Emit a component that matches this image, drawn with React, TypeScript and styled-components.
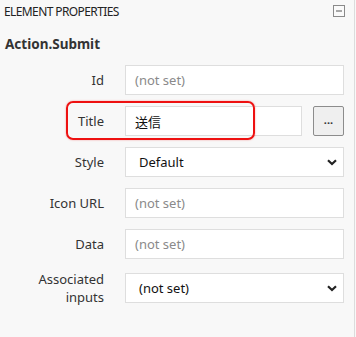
import React from "react";
import styled, { createGlobalStyle } from "styled-components";

const FONT = `"Noto Sans", "Noto Sans CJK JP", sans-serif`;

const GlobalStyle = createGlobalStyle`
  html, body {
    margin: 0;
    padding: 0;
    background: #f8f8f8;
  }
`;

type Field = {
  label: string;
  value?: string;
  kind: "text" | "select" | "textButton";
};

const fields: Field[] = [
  { label: "Id", kind: "text" },
  { label: "Title", value: "送信", kind: "textButton" },
  { label: "Style", value: "Default", kind: "select" },
  { label: "Icon URL", kind: "text" },
  { label: "Data", kind: "text" },
  { label: "Associated inputs", value: "(not set)", kind: "select" },
];

const Chevron = () => (
  <svg width="10" height="7" viewBox="0 0 10 7">
    <path d="M1 1.2 L5 5 L9 1.2" fill="none" stroke="#222" strokeWidth="2.2" />
  </svg>
);

const CollapseIcon = () => (
  <svg width="12" height="12" viewBox="0 0 12 12">
    <rect x="0.5" y="0.5" width="11" height="11" fill="#fafafa" stroke="#8a8a8a" />
    <line x1="3" y1="6" x2="9" y2="6" stroke="#555" strokeWidth="1" />
  </svg>
);

export default function App() {
  return (
    <Panel>
      <GlobalStyle />
      <Header>
        <HeaderTitle>ELEMENT PROPERTIES</HeaderTitle>
        <CollapseIcon />
      </Header>
      <ElementName>Action.Submit</ElementName>
      <Rows>
        {fields.map((f) => (
          <Row key={f.label}>
            <Label>{f.label === "Associated inputs" ? <>Associated<br />inputs</> : f.label}</Label>
            <Control>
              {f.kind === "select" ? (
                <Select>
                  <span>{f.value}</span>
                  <Chevron />
                </Select>
              ) : (
                <Input $placeholder={!f.value}>{f.value ?? "(not set)"}</Input>
              )}
              {f.kind === "textButton" && <MoreButton>...</MoreButton>}
            </Control>
          </Row>
        ))}
      </Rows>
      <Highlight />
    </Panel>
  );
}

const Panel = styled.div`
  position: relative;
  width: 355px;
  height: 337px;
  border-right: 1px solid #dcdcdc;
  background: #f8f8f8;
  font-family: ${FONT};
  color: #333;
  box-sizing: border-box;
`;

const Header = styled.div`
  display: flex;
  align-items: center;
  justify-content: space-between;
  height: 22px;
  padding: 0 9px 0 4px;
`;

const HeaderTitle = styled.div`
  font-size: 12px;
  letter-spacing: -0.6px;
  color: #222;
`;

const ElementName = styled.div`
  margin-top: 12px;
  padding-left: 5px;
  font-size: 13.5px;
  font-weight: 700;
  color: #333;
  height: 20px;
  line-height: 20px;
`;

const Rows = styled.div`
  display: flex;
  flex-direction: column;
  gap: 11px;
  margin-top: 11px;
  padding-right: 10px;
`;

const Row = styled.div`
  display: grid;
  grid-template-columns: 104px 1fr;
  column-gap: 21px;
  align-items: center;
`;

const Label = styled.div`
  text-align: right;
  font-size: 13px;
  line-height: 18px;
  color: #333;
`;

const Control = styled.div`
  display: flex;
  gap: 11px;
`;

const Box = styled.div`
  box-sizing: border-box;
  height: 30px;
  border: 1px solid #dedede;
  background: #fff;
  display: flex;
  align-items: center;
  font-size: 13px;
`;

const Input = styled(Box)<{ $placeholder: boolean }>`
  flex: 1;
  padding-left: 9px;
  color: ${(p) => (p.$placeholder ? "#8a8a8a" : "#111")};
`;

const Select = styled(Box)`
  flex: 1;
  justify-content: space-between;
  padding: 0 6px 0 13px;
  color: #111;
`;

const MoreButton = styled.div`
  box-sizing: border-box;
  width: 31px;
  height: 30px;
  border: 1px solid #8c8c8c;
  border-radius: 2px;
  background: #efefef;
  display: flex;
  align-items: center;
  justify-content: center;
  font-size: 11px;
  font-weight: 700;
  color: #333;
  padding-bottom: 3px;
`;

const Highlight = styled.div`
  position: absolute;
  left: 66px;
  top: 101px;
  width: 189px;
  height: 39px;
  box-sizing: border-box;
  border: 2px solid #ee1111;
  border-radius: 7px;
  box-shadow: 0 0 2px rgba(238, 17, 17, 0.4);
  pointer-events: none;
`;
